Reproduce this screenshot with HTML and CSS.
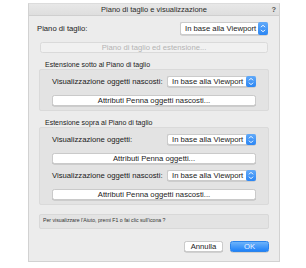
FILE: index.html
```html
<!DOCTYPE html>
<html lang="it">
<head>
  <meta charset="UTF-8" />
  <title>Piano di taglio e visualizzazione</title>
  <link rel="stylesheet" href="styles.css">
</head>
<body>
  <div class="dialog">
    <div class="titlebar">
      <span class="title">Piano di taglio e visualizzazione</span>
      <span class="help">?</span>
    </div>

    <div class="content">
      <div class="row first-row">
        <span class="label">Piano di taglio:</span>
        <div class="popup wide-popup">
          <span class="popup-text">In base alla Viewport</span>
          <span class="stepper">
            <svg width="10" height="13" viewBox="0 0 10 13"><path d="M3 5.2 L5 3.2 L7 5.2 M3 7.8 L5 9.8 L7 7.8" fill="none" stroke="#fff" stroke-width="1"/></svg>
          </span>
        </div>
      </div>

      <button class="btn full disabled">Piano di taglio ed estensione...</button>

      <div class="heading">Estensione sotto al Piano di taglio</div>
      <div class="group">
        <div class="row">
          <span class="label">Visualizzazione oggetti nascosti:</span>
          <div class="popup">
            <span class="popup-text">In base alla Viewport</span>
            <span class="stepper">
              <svg width="10" height="11" viewBox="0 0 10 11"><path d="M3 4.3 L5 2.3 L7 4.3 M3 6.7 L5 8.7 L7 6.7" fill="none" stroke="#fff" stroke-width="1"/></svg>
            </span>
          </div>
        </div>
        <button class="btn full">Attributi Penna oggetti nascosti...</button>
      </div>

      <div class="heading">Estensione sopra al Piano di taglio</div>
      <div class="group">
        <div class="row">
          <span class="label">Visualizzazione oggetti:</span>
          <div class="popup">
            <span class="popup-text">In base alla Viewport</span>
            <span class="stepper">
              <svg width="10" height="11" viewBox="0 0 10 11"><path d="M3 4.3 L5 2.3 L7 4.3 M3 6.7 L5 8.7 L7 6.7" fill="none" stroke="#fff" stroke-width="1"/></svg>
            </span>
          </div>
        </div>
        <button class="btn full">Attributi Penna oggetti...</button>
        <div class="row second">
          <span class="label">Visualizzazione oggetti nascosti:</span>
          <div class="popup">
            <span class="popup-text">In base alla Viewport</span>
            <span class="stepper">
              <svg width="10" height="11" viewBox="0 0 10 11"><path d="M3 4.3 L5 2.3 L7 4.3 M3 6.7 L5 8.7 L7 6.7" fill="none" stroke="#fff" stroke-width="1"/></svg>
            </span>
          </div>
        </div>
        <button class="btn full">Attributi Penna oggetti nascosti...</button>
      </div>

      <div class="helpbox">Per visualizzare l'Aiuto, premi F1 o fai clic sull'icona ?</div>

      <div class="actions">
        <button class="btn action">Annulla</button>
        <button class="btn action ok">OK</button>
      </div>
    </div>
  </div>
</body>
</html>
```

FILE: styles.css
```css
body {
  margin: 0;
  background: #fff;
  font-family: "Liberation Sans", Arial, sans-serif;
  color: #1a1a1a;
}
.dialog {
  margin: 3px 0 0 28px;
  width: 250px;
  border: 1px solid #d2d2d2;
  border-top-color: #dcdcdc;
  background: #ececec;
}
.titlebar {
  height: 11px;
  border-bottom: 1px solid #cfcfcf;
  background: linear-gradient(#e8e8e8, #dedede);
  position: relative;
  text-align: center;
  font-size: 7.5px;
  line-height: 11px;
}
.title {
  color: #2a2a2a;
}
.help {
  position: absolute;
  right: 3px;
  top: 0;
  font-weight: bold;
  color: #555;
}
.content {
  padding: 6px 10px 9px 10px;
}
.row {
  display: flex;
  justify-content: space-between;
  align-items: center;
  height: 11px;
}
.first-row {
  height: 13px;
  margin: 0 1px 0 -2px;
}
.label {
  font-size: 7.7px;
  line-height: 11px;
  white-space: nowrap;
}
.popup {
  display: flex;
  align-items: stretch;
  width: 89px;
  height: 11px;
  box-sizing: border-box;
  background: #fff;
  border: 1px solid #cbcbcb;
  border-right: none;
  border-radius: 2px;
  box-shadow: 0 0.5px 0 #b8b8b8;
}
.wide-popup {
  width: 88px;
  height: 13px;
}
.popup-text {
  flex: 1;
  padding-left: 4px;
  font-size: 7.7px;
  line-height: 10px;
  white-space: nowrap;
  overflow: hidden;
}
.wide-popup .popup-text {
  line-height: 12px;
}
.stepper {
  width: 10px;
  margin: -1px 0;
  border-radius: 2px;
  background: linear-gradient(#62aaf9, #2b86f4);
  display: flex;
  align-items: center;
  justify-content: center;
}
.stepper svg {
  display: block;
}
.btn {
  display: block;
  height: 11px;
  padding: 0;
  box-sizing: border-box;
  background: #fff;
  border: 1px solid #cacaca;
  border-radius: 2.5px;
  box-shadow: 0 0.5px 0 #b5b5b5;
  font-family: "Liberation Sans", Arial, sans-serif;
  font-size: 7.7px;
  line-height: 9px;
  color: #1a1a1a;
  text-align: center;
}
.full {
  width: 100%;
  margin-top: 8px;
}
.content > .full {
  width: 228px;
  margin: 7px 1px 0 1px;
}
.disabled {
  background: #f1f1f1;
  border-color: #dadada;
  box-shadow: none;
  color: #b4b4b4;
}
.heading {
  margin-top: 7px;
  padding-left: 6px;
  font-size: 7px;
  line-height: 9px;
  color: #1a1a1a;
}
.group {
  border: 1px solid #dadada;
  border-radius: 2px;
  background: #e3e3e3;
  padding: 6px 12px 4px 12px;
}
.row.second {
  margin-top: 6px;
}
.helpbox {
  margin-top: 9px;
  height: 12px;
  border: 1px solid #d8d8d8;
  border-radius: 2px;
  background: #e3e3e3;
  padding: 1px 3px 0 3px;
  font-size: 5.2px;
  line-height: 9px;
  color: #333;
}
.actions {
  display: flex;
  justify-content: flex-end;
  gap: 7px;
  margin-top: 12px;
}
.action {
  width: 39px;
}
.ok {
  background: linear-gradient(#6db3fa, #1f82f8);
  border-color: #2c84ea;
  color: #e9f3ff;
}
```
